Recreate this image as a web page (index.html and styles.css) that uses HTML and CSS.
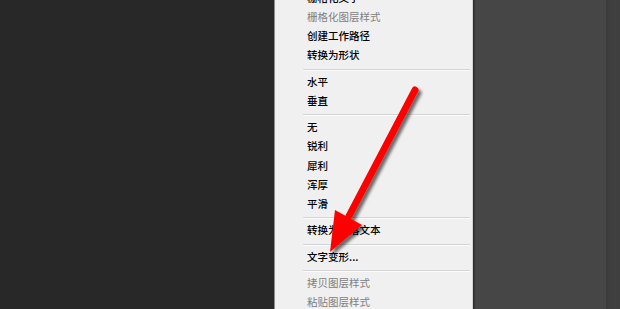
FILE: index.html
```html
<!DOCTYPE html>
<html lang="zh">
<head>
<meta charset="utf-8">
<link rel="stylesheet" href="styles.css">
</head>
<body>
<div class="app">
  <div class="canvas"></div>
  <div class="menu">
    <div class="list">
      <div class="item">栅格化文字</div>
      <div class="item disabled">栅格化图层样式</div>
      <div class="item">创建工作路径</div>
      <div class="item">转换为形状</div>
      <div class="sep"></div>
      <div class="item">水平</div>
      <div class="item">垂直</div>
      <div class="sep"></div>
      <div class="item">无</div>
      <div class="item">锐利</div>
      <div class="item">犀利</div>
      <div class="item">浑厚</div>
      <div class="item">平滑</div>
      <div class="sep"></div>
      <div class="item">转换为段落文本</div>
      <div class="sep"></div>
      <div class="item">文字变形...</div>
      <div class="sep"></div>
      <div class="item disabled">拷贝图层样式</div>
      <div class="item disabled">粘贴图层样式</div>
    </div>
  </div>
  <div class="shadow"></div>
  <div class="panel"></div>
  <div class="edge"></div>
  <svg class="arrow" width="620" height="309" viewBox="0 0 620 309">
    <defs>
      <filter id="ds" x="-20%" y="-20%" width="140%" height="140%">
        <feDropShadow dx="3" dy="3" stdDeviation="1.6" flood-color="#000" flood-opacity="0.55"/>
      </filter>
    </defs>
    <g filter="url(#ds)">
      <line x1="415" y1="90" x2="349" y2="216" stroke="#ff0000" stroke-width="7" stroke-linecap="round"/>
      <polygon points="330,252 335,210 362,225" fill="#ff0000"/>
    </g>
  </svg>
</div>
</body>
</html>
```
FILE: styles.css
```css
html, body {
  margin: 0;
  padding: 0;
}
body {
  width: 620px;
  height: 309px;
  overflow: hidden;
  background: #282828;
  font-family: "Noto Sans CJK SC", "Microsoft YaHei", sans-serif;
}
.app {
  position: relative;
  display: flex;
  width: 620px;
  height: 309px;
  overflow: hidden;
}
.canvas {
  width: 274px;
  flex: none;
  background: #282828;
}
.menu {
  width: 197px;
  flex: none;
  background: #f0f0f0;
  border-left: 1px solid #8c8c8c;
  border-right: 1px solid #d2d2d2;
  overflow: hidden;
}
.list {
  margin-top: -12.4px;
}
.item {
  height: 19.25px;
  line-height: 19.25px;
  padding-left: 32px;
  font-size: 10.5px;
  font-weight: 500;
  color: #000;
  white-space: nowrap;
}
.item.disabled {
  color: #808080;
  font-weight: 400;
}
.sep {
  margin: 4px 2px 1px 28px;
  height: 0;
  border-top: 1px solid #d4d4d4;
  border-bottom: 1px solid #fbfbfb;
}
.shadow {
  width: 2px;
  flex: none;
  background: linear-gradient(to right, #2c2c2c, #3c3c3c);
}
.panel {
  width: 131px;
  flex: none;
  background: #464646;
}
.edge {
  flex: 1;
  background: linear-gradient(to right, #3a3a3a, #3f3f3f 3px, #3f3f3f);
}
.arrow {
  position: absolute;
  left: 0;
  top: 0;
  pointer-events: none;
}
```
